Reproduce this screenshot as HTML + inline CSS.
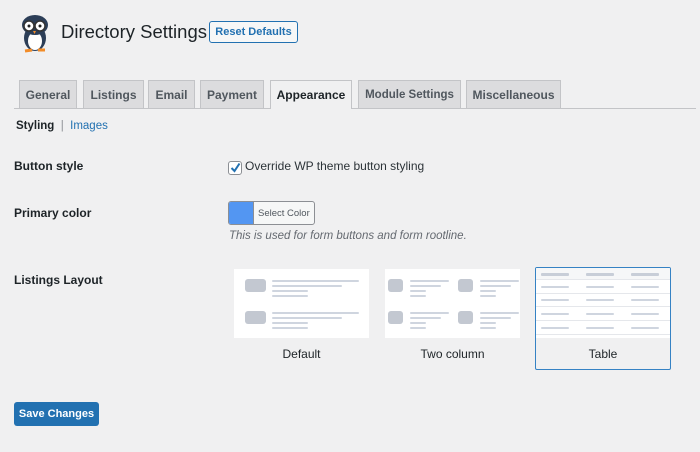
<!DOCTYPE html>
<html><head><style>
body{margin:0;width:700px;height:452px;background:#f0f0f1;font-family:"Liberation Sans",sans-serif;color:#1d2327;position:relative;overflow:hidden;font-size:12px}
.a{position:absolute;white-space:nowrap}
.tab{position:absolute;top:80px;height:28px;line-height:28px;background:#dcdcde;border:1px solid #c3c4c7;border-bottom:none;font-size:12px;font-weight:bold;color:#50575e;text-align:center;box-sizing:border-box;white-space:nowrap}
.lbl{position:absolute;left:14px;font-size:12px;font-weight:bold}
.thumb{position:absolute;background:#fff}
.ic{position:absolute;background:#c3c8d1;border-radius:3px}
.ln{position:absolute;height:2px;background:#cfd5df;border-radius:1px}
.cap{position:absolute;font-size:12px;text-align:center;width:135px}
</style></head><body>
<svg class="a" style="left:19px;top:13px" width="34" height="40" viewBox="0 0 34 40">
<ellipse cx="16" cy="25" rx="11" ry="13" fill="#2c3e57"/>
<ellipse cx="16" cy="28" rx="7" ry="9" fill="#fff"/>
<ellipse cx="16" cy="12" rx="13" ry="10" fill="#2c3e57"/>
<circle cx="10" cy="13" r="5" fill="#fff" stroke="#333" stroke-width="1.5"/>
<circle cx="21" cy="13" r="5" fill="#fff" stroke="#333" stroke-width="1.5"/>
<circle cx="10" cy="13" r="1.5" fill="#222"/><circle cx="21" cy="13" r="1.5" fill="#222"/>
<path d="M14 18 L17 18 L15.5 21Z" fill="#f28c28"/>
<path d="M6 38 L13 37 M19 37 L26 37" stroke="#f28c28" stroke-width="3"/>
</svg>
<div class="a" style="left:61px;top:21px;font-size:18.5px;color:#1d2327">Directory Settings</div>
<div class="a" style="left:209px;top:21px;width:87px;height:20px;border:1px solid #2271b1;border-radius:3px;background:#f6f7f7;color:#2271b1;font-size:11px;font-weight:bold;line-height:20px;text-align:center">Reset Defaults</div>

<div class="a" style="left:14px;top:108px;width:682px;height:1px;background:#c3c4c7"></div>
<div class="tab" style="left:19px;width:58px">General</div>
<div class="tab" style="left:83px;width:61px">Listings</div>
<div class="tab" style="left:148px;width:47px">Email</div>
<div class="tab" style="left:200px;width:64px">Payment</div>
<div class="tab" style="left:270px;width:82px;background:#f0f0f1;color:#1d2327;height:29px">Appearance</div>
<div class="tab" style="left:358px;width:103px;font-size:11.5px">Module Settings</div>
<div class="tab" style="left:466px;width:95px">Miscellaneous</div>

<div class="a" style="left:16px;top:120px;font-size:11.5px"><b>Styling</b> <span style="color:#8c8f94">&nbsp;|&nbsp;</span> <span style="color:#2271b1">Images</span></div>

<div class="lbl" style="top:159px">Button style</div>
<div class="a" style="left:228px;top:161px;width:12px;height:12px;border:1px solid #8c8f94;border-radius:3px;background:#fff"></div>
<svg class="a" style="left:229px;top:161px" width="13" height="13"><path d="M2.5 7 L5.5 10 L10.5 2.5" stroke="#2271b1" stroke-width="2" fill="none"/></svg>
<div class="a" style="left:245px;top:159px;font-size:12px;color:#2c3338">Override WP theme button styling</div>

<div class="lbl" style="top:206px">Primary color</div>
<div class="a" style="left:228px;top:201px;width:85px;height:22px;border:1px solid #8c8f94;border-radius:3px;background:#f6f7f7;overflow:hidden">
<div class="a" style="left:0;top:0;width:24px;height:22px;background:#5396f2;border-right:1px solid #8c8f94"></div>
<div class="a" style="left:29px;top:6px;font-size:9.5px;color:#50575e">Select Color</div></div>
<div class="a" style="left:229px;top:230px;font-size:11.5px;font-style:italic;color:#646970">This is used for form buttons and form rootline.</div>

<div class="lbl" style="top:273px">Listings Layout</div>

<div class="thumb" style="left:234px;top:269px;width:135px;height:69px">
<div class="ic" style="left:11px;top:10px;width:21px;height:13px"></div>
<div class="ln" style="left:38px;top:11px;width:87px"></div><div class="ln" style="left:38px;top:16px;width:70px"></div><div class="ln" style="left:38px;top:21px;width:36px"></div><div class="ln" style="left:38px;top:26px;width:36px"></div>
<div class="ic" style="left:11px;top:42px;width:21px;height:13px"></div>
<div class="ln" style="left:38px;top:43px;width:87px"></div><div class="ln" style="left:38px;top:48px;width:70px"></div><div class="ln" style="left:38px;top:53px;width:36px"></div><div class="ln" style="left:38px;top:58px;width:36px"></div>
</div>
<div class="cap" style="left:234px;top:347px">Default</div>

<div class="thumb" style="left:385px;top:269px;width:135px;height:69px">
<div class="ic" style="left:3px;top:10px;width:15px;height:13px"></div>
<div class="ln" style="left:25px;top:11px;width:39px"></div><div class="ln" style="left:25px;top:16px;width:31px"></div><div class="ln" style="left:25px;top:21px;width:16px"></div><div class="ln" style="left:25px;top:26px;width:16px"></div>
<div class="ic" style="left:73px;top:10px;width:15px;height:13px"></div>
<div class="ln" style="left:95px;top:11px;width:39px"></div><div class="ln" style="left:95px;top:16px;width:31px"></div><div class="ln" style="left:95px;top:21px;width:16px"></div><div class="ln" style="left:95px;top:26px;width:16px"></div>
<div class="ic" style="left:3px;top:42px;width:15px;height:13px"></div>
<div class="ln" style="left:25px;top:43px;width:39px"></div><div class="ln" style="left:25px;top:48px;width:31px"></div><div class="ln" style="left:25px;top:53px;width:16px"></div><div class="ln" style="left:25px;top:58px;width:16px"></div>
<div class="ic" style="left:73px;top:42px;width:15px;height:13px"></div>
<div class="ln" style="left:95px;top:43px;width:39px"></div><div class="ln" style="left:95px;top:48px;width:31px"></div><div class="ln" style="left:95px;top:53px;width:16px"></div><div class="ln" style="left:95px;top:58px;width:16px"></div>
</div>
<div class="cap" style="left:385px;top:347px">Two column</div>

<div class="a" style="left:535px;top:267px;width:134px;height:101px;border:1px solid #3582c4;border-radius:2px;background:#f0f0f1;overflow:hidden">
<div class="thumb" style="left:0;top:0;width:134px;height:70px">
<div class="a" style="left:0;top:0;width:134px;height:11px;background:#f6f7f8"></div>
<div class="ln" style="left:5px;top:5px;width:28px;height:3px;background:#c8ced8"></div><div class="ln" style="left:50px;top:5px;width:28px;height:3px;background:#c8ced8"></div><div class="ln" style="left:95px;top:5px;width:28px;height:3px;background:#c8ced8"></div>
<div class="a" style="left:0;top:11px;width:134px;height:1px;background:#e5e7eb"></div>
<div class="a" style="left:0;top:25px;width:134px;height:1px;background:#e5e7eb"></div>
<div class="a" style="left:0;top:38px;width:134px;height:1px;background:#e5e7eb"></div>
<div class="a" style="left:0;top:52px;width:134px;height:1px;background:#e5e7eb"></div>
<div class="a" style="left:0;top:66px;width:134px;height:1px;background:#e5e7eb"></div>
<div class="ln" style="left:5px;top:18px;width:28px"></div><div class="ln" style="left:50px;top:18px;width:28px"></div><div class="ln" style="left:95px;top:18px;width:28px"></div>
<div class="ln" style="left:5px;top:31px;width:28px"></div><div class="ln" style="left:50px;top:31px;width:28px"></div><div class="ln" style="left:95px;top:31px;width:28px"></div>
<div class="ln" style="left:5px;top:45px;width:28px"></div><div class="ln" style="left:50px;top:45px;width:28px"></div><div class="ln" style="left:95px;top:45px;width:28px"></div>
<div class="ln" style="left:5px;top:59px;width:28px"></div><div class="ln" style="left:50px;top:59px;width:28px"></div><div class="ln" style="left:95px;top:59px;width:28px"></div>
</div>
<div class="cap" style="left:0;top:79px;width:134px">Table</div>
</div>

<div class="a" style="left:14px;top:402px;width:85px;height:24px;background:#2271b1;border-radius:3px;color:#fff;font-size:11px;font-weight:bold;line-height:24px;text-align:center">Save Changes</div>
</body></html>
